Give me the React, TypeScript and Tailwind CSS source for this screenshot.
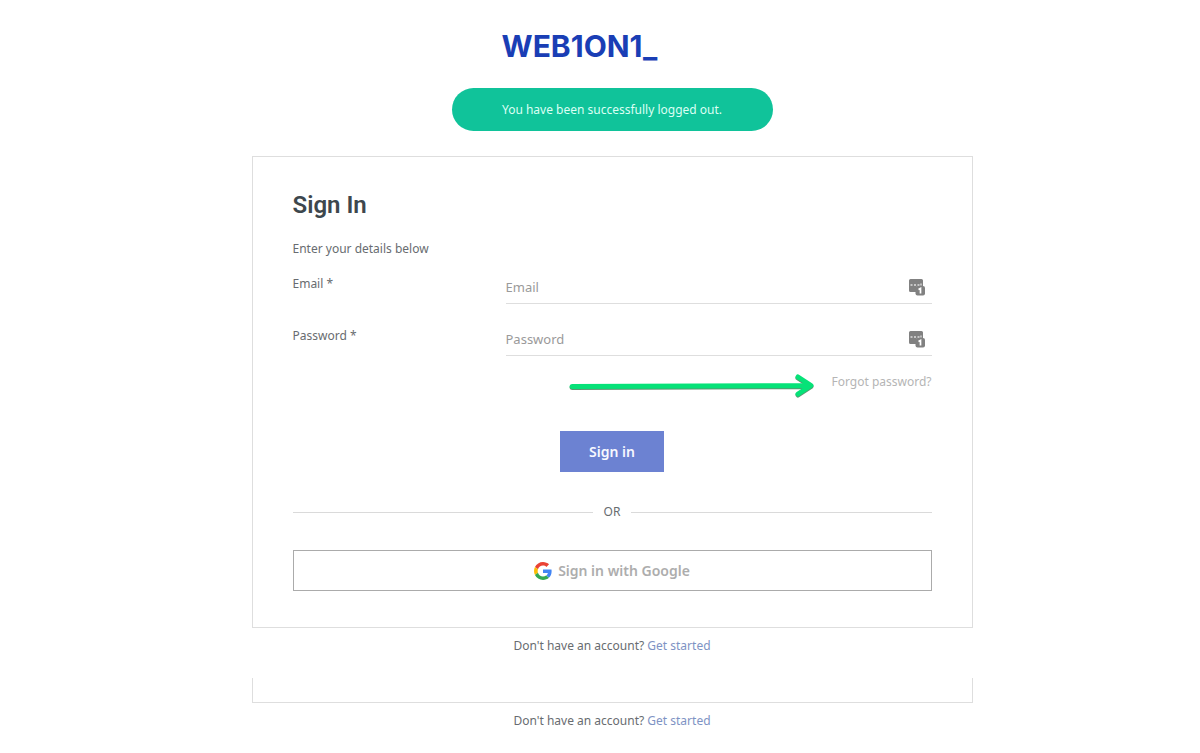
import React from "react";

function ManagerIcon() {
  return (
    <svg viewBox="0 0 18 18" className="size-[18px] shrink-0" aria-hidden="true">
      <path
        d="M2.500 0h11q1.500 0 1.500 1.500V7h-5q-2 0-2 2v4H2.500Q1 13 1 11.500v-10Q1 0 2.500 0z"
        fill="#818181"
      />
      <path d="M2.500 6h2M6 6h2M9.500 6h2M13 4.500v2" stroke="#dedede" strokeWidth="1.300" />
      <rect x="7.500" y="7" width="9.500" height="9.500" rx="2" fill="#818181" />
      <path d="M10.500 10.500l2-1v5" fill="none" stroke="#fff" strokeWidth="1.700" />
    </svg>
  );
}

function GoogleIcon() {
  return (
    <svg viewBox="0 0 48 48" className="size-[18px]" aria-hidden="true">
      <path fill="#EA4335" d="M24 9.500c3.540 0 6.710 1.220 9.210 3.600l6.850-6.850C35.900 2.380 30.470 0 24 0 14.620 0 6.510 5.380 2.560 13.220l7.980 6.190C12.430 13.720 17.740 9.500 24 9.500z" />
      <path fill="#4285F4" d="M46.980 24.550c0-1.570-.15-3.090-.38-4.550H24v9.020h12.940c-.58 2.960-2.260 5.480-4.780 7.180l7.730 6c4.510-4.180 7.090-10.360 7.090-17.650z" />
      <path fill="#FBBC05" d="M10.530 28.590c-.48-1.450-.76-2.990-.76-4.590s.27-3.140.76-4.590l-7.980-6.190C.92 16.460 0 20.120 0 24c0 3.880.92 7.540 2.560 10.780l7.970-6.190z" />
      <path fill="#34A853" d="M24 48c6.480 0 11.930-2.130 15.890-5.810l-7.730-6c-2.150 1.450-4.920 2.300-8.160 2.300-6.260 0-11.570-4.220-13.470-9.910l-7.980 6.190C6.510 42.620 14.620 48 24 48z" />
    </svg>
  );
}

function Field({ id, label, type }: { id: string; label: string; type: string }) {
  return (
    <div className="grid grid-cols-3">
      <label htmlFor={id} className="leading-6">
        {label} *
      </label>
      <div className="col-span-2 flex h-8 items-center border-b border-[#dedede] pr-1.5">
        <input
          id={id}
          type={type}
          placeholder={label}
          className="h-full min-w-0 flex-1 bg-transparent pb-0.5 text-[13px] outline-none placeholder:text-[#9a9a9a]"
        />
        <ManagerIcon />
      </div>
    </div>
  );
}

function Arrow() {
  return (
    <svg viewBox="0 0 248 28" className="h-7 w-[248px]" fill="none" strokeLinecap="round" strokeLinejoin="round" aria-hidden="true">
      <path d="M3 15.500L240 14.500M229 6L242 14.500L229 23" stroke="#5c9572" strokeWidth="5" />
      <path d="M3 14.500L240 13.500M229 5L242 13.500L229 22" stroke="#06e278" strokeWidth="5" />
    </svg>
  );
}

function SignUpPrompt() {
  return (
    <p className="text-center leading-5">
      Don't have an account?{" "}
      <a href="#signup" className="text-[#7e93c4]">
        Get started
      </a>
    </p>
  );
}

export default function App() {
  return (
    <div className="bg-white px-4 pt-7 font-['Noto_Sans',sans-serif] text-[12px] text-[#686c70] md:pr-0 md:pl-6">
      <main className="mx-auto max-w-[721px]">
        <header className="mx-auto flex max-w-[321px] flex-col">
          <h1 className="pl-[50px] font-['Inter',sans-serif] text-[30px] leading-9 font-bold text-[#1a3eb5]">
            WEB1ON1_
          </h1>
          <div role="status" className="mt-6 rounded-full bg-[#10c39a] py-3 text-center leading-[19px] text-[#dcfff4]">
            You have been successfully logged out.
          </div>
        </header>

        <section className="mt-[25px] border border-[#dedede] px-10 pt-8 pb-9">
          <form onSubmit={(e) => e.preventDefault()}>
            <h2 className="font-['Roboto',sans-serif] text-2xl font-semibold text-[#3d474d]">Sign In</h2>
            <p className="mt-4 leading-6">Enter your details below</p>
            <div className="mt-[11px] flex flex-col gap-5">
              <Field id="email" label="Email" type="email" />
              <Field id="password" label="Password" type="password" />
            </div>
            <div className="mt-4 flex items-center justify-end gap-[14px]">
              <Arrow />
              <a href="#forgot" className="pb-2 text-[#b5b5b5]">
                Forgot password?
              </a>
            </div>
            <div className="mt-[31px] flex justify-center">
              <button type="submit" className="h-[41px] bg-[#6c82d2] px-[29px] text-[14px] font-semibold text-[#f7f8ff]">
                Sign in
              </button>
            </div>
          </form>
          <div className="mt-7 flex items-center gap-[11px] leading-6">
            <span className="h-px flex-1 bg-[#dadada]" />
            OR
            <span className="h-px flex-1 bg-[#dadada]" />
          </div>
          <button
            type="button"
            className="mt-[26px] flex h-[41px] w-full items-center justify-center gap-1.5 border border-[#ababab] text-[14px] font-semibold text-[#adadad]"
          >
            <GoogleIcon />
            Sign in with Google
          </button>
        </section>
        <div className="mt-2">
          <SignUpPrompt />
        </div>

        <div className="mt-[22px] h-[25px] border-x border-b border-[#dedede]" />
        <div className="mt-2">
          <SignUpPrompt />
        </div>
      </main>
    </div>
  );
}
